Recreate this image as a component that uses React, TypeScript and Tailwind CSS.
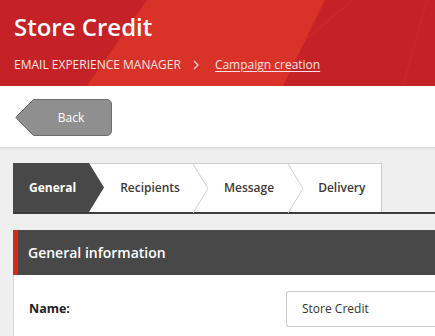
import React from "react";

function Chevron() {
  return (
    <svg width="15" height="49" viewBox="0 0 15 49" className="shrink-0 block">
      <polyline points="0,0 15,24.5 0,49" fill="none" stroke="#cfcfcf" strokeWidth="1" />
    </svg>
  );
}

export default function App() {
  return (
    <div
      className="w-[435px] h-[336px] overflow-hidden bg-[#efefef] text-[#333]"
      style={{ fontFamily: '"Open Sans", "Liberation Sans", sans-serif' }}
    >
      {/* Header */}
      <div className="relative h-[86px] bg-[#c42227] overflow-hidden">
        <svg className="absolute inset-0" width="435" height="86" viewBox="0 0 435 86">
          <polygon points="147,0 325,0 283,86 87,86" fill="#d93229" />
          <line x1="353" y1="0" x2="305" y2="40" stroke="#cf2e2a" strokeWidth="1" />
          <line x1="427" y1="0" x2="403" y2="86" stroke="#cc2a2c" strokeWidth="1" />
        </svg>
        <div className="relative px-[14px] pt-[10px]">
          <h1 className="text-[24px] leading-[33px] font-semibold text-white">Store Credit</h1>
          <div className="mt-[13px] flex items-center text-[12px] leading-[17px] text-[#fbe2e2]">
            <span>EMAIL EXPERIENCE MANAGER</span>
            <svg width="6" height="10" viewBox="0 0 6 10" className="ml-[12px] mr-[16px]">
              <polyline points="1,1 5,5 1,9" fill="none" stroke="#f6d0d0" strokeWidth="1.3" />
            </svg>
            <span className="underline underline-offset-2">Campaign creation</span>
          </div>
        </div>
      </div>

      {/* Toolbar */}
      <div className="h-[62px] bg-white border-b border-[#dedede] shadow-[0_1px_2px_rgba(0,0,0,0.06)] pl-[15px] pt-[13px]">
        <button className="relative w-[97px] h-[37px] flex items-center justify-center">
          <svg className="absolute inset-0" width="97" height="37" viewBox="0 0 97 37">
            <path
              d="M18.5 0.5 H92 A4.5 4.5 0 0 1 96.5 5 V32 A4.5 4.5 0 0 1 92 36.5 H18.5 L1.5 19.5 Q0.5 18.5 1.5 17.5 Z"
              fill="#8f8f8f"
              stroke="#6c6c6c"
              strokeWidth="1"
            />
          </svg>
          <span className="relative pl-[15px] text-[12px] text-white">Back</span>
        </button>
      </div>

      {/* Body */}
      <div className="pl-[13px] pt-[15px]">
        {/* Tabs */}
        <div className="border-b-2 border-[#3d3d3d]">
          <div className="flex h-[49px] w-[369px] bg-white border-t border-r border-[#cfcfcf] text-[12px] font-semibold">
            <div className="flex items-center bg-[#484848] pl-[16px] pr-[13px] text-white font-bold -mt-px h-[49px]">
              General
            </div>
            <svg width="15" height="49" viewBox="0 0 15 49" className="shrink-0 block -mt-px">
              <polygon points="0,0 15,24.5 0,49" fill="#484848" />
            </svg>
            <div className="flex items-center pl-[16px] pr-[13px] text-[#3a3a3a]">Recipients</div>
            <Chevron />
            <div className="flex items-center pl-[16px] pr-[14px] text-[#3a3a3a]">Message</div>
            <Chevron />
            <div className="flex items-center pl-[15px] pr-[15px] text-[#3a3a3a]">Delivery</div>
          </div>
        </div>

        {/* Section */}
        <div className="mt-[16px] h-[45px] bg-[#484848] border-l-[5px] border-[#d9261f] flex items-center pl-[10px]">
          <span className="text-[14px] font-semibold text-white">General information</span>
        </div>
        <div className="bg-white border-l border-[#d6d6d6] h-[80px] flex items-start pt-[16px]">
          <div className="w-[272px] pl-[15px] h-[36px] flex items-center text-[12.5px] font-bold text-[#222]">
            Name:
          </div>
          <div className="flex-1 h-[36px] border border-r-0 border-[#cccccc] rounded-l-[3px] flex items-center pl-[15px] text-[12px] text-[#333]">
            Store Credit
          </div>
        </div>
      </div>
    </div>
  );
}
